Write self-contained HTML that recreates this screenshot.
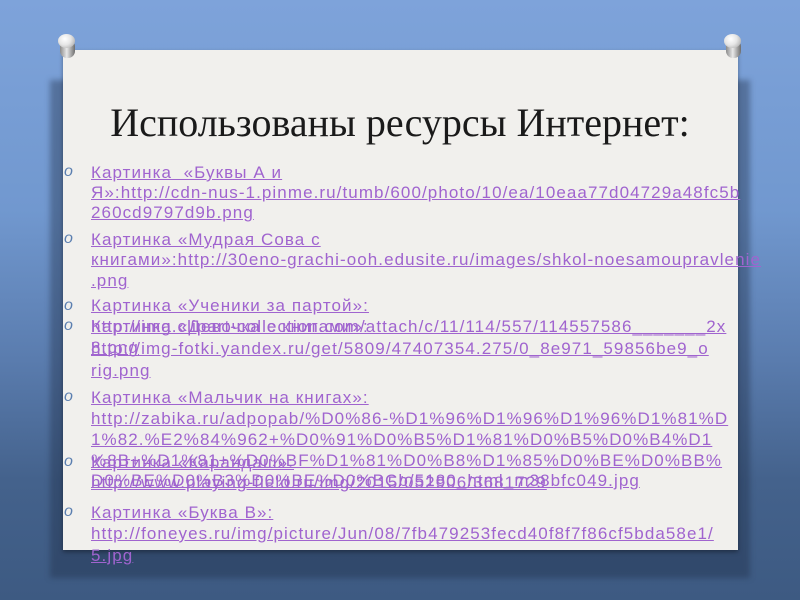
<!DOCTYPE html>
<html><head><meta charset="utf-8"><style>
html,body{margin:0;padding:0;}
body{width:800px;height:600px;overflow:hidden;position:relative;
background:linear-gradient(180deg,#7ea3da 0%,#7198cf 35%,#5a7cae 60%,#44628c 80%,#3d5a82 100%);
font-family:"Liberation Sans","DejaVu Sans",sans-serif;}
.shadow{position:absolute;left:50px;top:80px;width:700px;height:498px;background:rgba(30,45,70,0.4);filter:blur(3px);}
.card{position:absolute;left:63px;top:50px;width:675px;height:500px;background:#f1f0ed;box-shadow:0 2px 4px rgba(0,0,0,.35);}
.pin{position:absolute;width:18px;height:28px;}
.pin .head{position:absolute;left:0;top:0;width:17px;height:14px;border-radius:50%;background:radial-gradient(circle at 40% 35%,#fff 0%,#e6e6e6 45%,#9a9a9a 100%);}
.pin .body{position:absolute;left:2px;top:8px;width:15px;height:16px;border-radius:4px 4px 7px 7px;background:linear-gradient(90deg,#8a8a8a,#e8e8e8 45%,#6d6d6d);}
h1{position:absolute;left:0;width:800px;top:99px;margin:0;text-align:center;font-family:"Liberation Serif",serif;font-weight:normal;font-size:40px;color:#1a1a1a;}
.l{position:absolute;left:91px;white-space:nowrap;font-size:17px;line-height:20px;color:#a064cf;text-decoration:underline;letter-spacing:1.08px;}
.b{position:absolute;left:64px;font-size:16px;font-style:italic;color:#5b7fb0;line-height:20px;}
</style></head><body>
<div class="shadow"></div>
<div class="card"></div>
<div class="pin" style="left:58px;top:34px"><div class="body"></div><div class="head"></div></div>
<div class="pin" style="left:724px;top:34px"><div class="body"></div><div class="head"></div></div>
<h1>Использованы ресурсы Интернет:</h1>

<div class="b" style="top:162px">o</div>
<div class="l" style="top:163px">Картинка&nbsp; «Буквы А и</div>
<div class="l" style="top:183px">Я»:http://cdn-nus-1.pinme.ru/tumb/600/photo/10/ea/10eaa77d04729a48fc5b</div>
<div class="l" style="top:203px">260cd9797d9b.png</div>

<div class="b" style="top:229px">o</div>
<div class="l" style="top:230px">Картинка «Мудрая Сова с</div>
<div class="l" style="top:250px">книгами»:http://30eno-grachi-ooh.edusite.ru/images/shkol-noesamoupravlenie</div>
<div class="l" style="top:271px">.png</div>

<div class="b" style="top:296px">o</div>
<div class="l" style="top:296px">Картинка «Ученики за партой»:</div>
<div class="l" style="top:317px">http://img.clipart-collection.com/attach/c/11/114/557/114557586_______2x</div>
<div class="l" style="top:338px">8.png</div>
<div class="b" style="top:316px">o</div>
<div class="l" style="top:317px">Картинка «Девочка с книгами»:</div>
<div class="l" style="top:339px">http://img-fotki.yandex.ru/get/5809/47407354.275/0_8e971_59856be9_o</div>
<div class="l" style="top:361px">rig.png</div>

<div class="b" style="top:387px">o</div>
<div class="l" style="top:388px">Картинка «Мальчик на книгах»:</div>
<div class="l" style="top:409px">http://zabika.ru/adpopab/%D0%86-%D1%96%D1%96%D1%96%D1%81%D</div>
<div class="l" style="top:430px">1%82.%E2%84%962+%D0%91%D0%B5%D1%81%D0%B5%D0%B4%D1</div>
<div class="l" style="top:451px">%8B+%D1%81+%D0%BF%D1%81%D0%B8%D1%85%D0%BE%D0%BB%</div>
<div class="l" style="top:471px">D0%BE%D0%B3%D0%BE%D0%BCb/5180_html_m38bfc049.jpg</div>
<div class="b" style="top:452px">o</div>
<div class="l" style="top:453px">Картинка «Карандаш»:</div>
<div class="l" style="top:473px">http://www.playing-field.ru/img/2015/052906/3681729</div>

<div class="b" style="top:502px">o</div>
<div class="l" style="top:503px">Картинка «Буква В»:</div>
<div class="l" style="top:524px">http://foneyes.ru/img/picture/Jun/08/7fb479253fecd40f8f7f86cf5bda58e1/</div>
<div class="l" style="top:546px">5.jpg</div>
</body></html>
